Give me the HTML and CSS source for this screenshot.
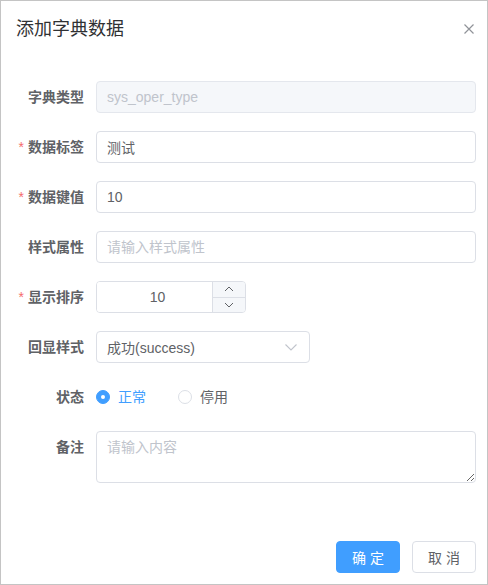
FILE: index.html
```html
<!DOCTYPE html>
<html lang="zh">
<head>
<meta charset="utf-8">
<title>添加字典数据</title>
<link rel="stylesheet" href="styles.css">
</head>
<body>
<div class="dialog">
  <div class="dialog-header">
    <span class="dialog-title">添加字典数据</span>
    <button class="dialog-close" aria-label="Close">
      <svg width="10" height="10" viewBox="0 0 10 10"><path d="M0.5 0.5 L9.5 9.5 M9.5 0.5 L0.5 9.5" stroke="#909399" stroke-width="1.2" fill="none"/></svg>
    </button>
  </div>
  <div class="dialog-body">
    <form class="form">
      <div class="form-item">
        <label class="form-label">字典类型</label>
        <div class="form-content"><input class="input is-disabled" value="sys_oper_type" disabled></div>
      </div>
      <div class="form-item">
        <label class="form-label is-required">数据标签</label>
        <div class="form-content"><input class="input" value="测试"></div>
      </div>
      <div class="form-item">
        <label class="form-label is-required">数据键值</label>
        <div class="form-content"><input class="input" value="10"></div>
      </div>
      <div class="form-item">
        <label class="form-label">样式属性</label>
        <div class="form-content"><input class="input" placeholder="请输入样式属性"></div>
      </div>
      <div class="form-item">
        <label class="form-label is-required">显示排序</label>
        <div class="form-content">
          <div class="number-input">
            <input class="number-field" value="10">
            <div class="number-controls">
              <span class="number-btn">
                <svg width="10" height="6" viewBox="0 0 10 6"><path d="M1 5 L5 1 L9 5" stroke="#606266" stroke-width="1" fill="none"/></svg>
              </span>
              <span class="number-btn">
                <svg width="10" height="6" viewBox="0 0 10 6"><path d="M1 1 L5 5 L9 1" stroke="#606266" stroke-width="1" fill="none"/></svg>
              </span>
            </div>
          </div>
        </div>
      </div>
      <div class="form-item">
        <label class="form-label">回显样式</label>
        <div class="form-content">
          <div class="select">
            <span class="select-value">成功(success)</span>
            <svg class="select-arrow" width="12" height="7" viewBox="0 0 12 7"><path d="M0.5 0.5 L6 6 L11.5 0.5" stroke="#c0c4cc" stroke-width="1.1" fill="none"/></svg>
          </div>
        </div>
      </div>
      <div class="form-item">
        <label class="form-label">状态</label>
        <div class="form-content radio-group">
          <span class="radio is-checked"><span class="radio-circle"></span><span class="radio-label">正常</span></span>
          <span class="radio"><span class="radio-circle"></span><span class="radio-label">停用</span></span>
        </div>
      </div>
      <div class="form-item">
        <label class="form-label">备注</label>
        <div class="form-content"><textarea class="textarea" placeholder="请输入内容"></textarea></div>
      </div>
    </form>
  </div>
  <div class="dialog-footer">
    <button class="btn btn-primary">确 定</button>
    <button class="btn">取 消</button>
  </div>
</div>
</body>
</html>
```
FILE: styles.css
```css
* { box-sizing: border-box; }
html, body { margin: 0; padding: 0; }
body {
  font-family: "Liberation Sans", "Noto Sans CJK SC", sans-serif;
  color: #606266;
  background: #fff;
}
.dialog {
  width: 488px;
  height: 585px;
  border: 1px solid #c4c4c4;
  background: #fff;
  display: flex;
  flex-direction: column;
}
.dialog-header {
  padding: 16px 13px 10px 15px;
  display: flex;
  align-items: center;
  justify-content: space-between;
}
.dialog-title {
  font-size: 18px;
  line-height: 24px;
  color: #303133;
}
.dialog-close {
  border: 0;
  background: none;
  padding: 0;
  width: 10px;
  height: 10px;
  display: flex;
  margin-top: -1px;
}
.dialog-body {
  padding: 30px 11px 0 15px;
  flex: 1;
}
.form-item {
  display: flex;
  margin-bottom: 18px;
}
.form-label {
  width: 80px;
  flex: none;
  padding-right: 12px;
  text-align: right;
  font-size: 14px;
  font-weight: bold;
  line-height: 32px;
  color: #606266;
}
.form-label.is-required::before {
  content: "*";
  color: #f56c6c;
  margin-right: 4px;
  font-weight: normal;
}
.form-content {
  flex: 1;
  min-height: 32px;
  display: flex;
  align-items: center;
}
.input {
  width: 100%;
  height: 32px;
  border: 1px solid #dcdfe6;
  border-radius: 4px;
  padding: 0 10px;
  font-family: inherit;
  font-size: 14px;
  color: #606266;
  background: #fff;
  outline: none;
}
.input::placeholder, .textarea::placeholder { color: #c0c4cc; }
.input.is-disabled {
  background: #f5f7fa;
  border-color: #e4e7ed;
  color: #c0c4cc;
}
.number-input {
  width: 150px;
  height: 32px;
  display: flex;
  border: 1px solid #dcdfe6;
  border-radius: 4px;
  overflow: hidden;
}
.number-field {
  flex: 1;
  min-width: 0;
  border: 0;
  padding: 0 9px 0 15px;
  text-align: center;
  font-family: inherit;
  font-size: 14px;
  color: #606266;
  outline: none;
}
.number-controls {
  width: 33px;
  display: flex;
  flex-direction: column;
  border-left: 1px solid #dcdfe6;
  background: #f5f7fa;
}
.number-btn {
  flex: 1;
  display: flex;
  align-items: center;
  justify-content: center;
}
.number-btn + .number-btn { border-top: 1px solid #dcdfe6; }
.select {
  width: 214px;
  height: 32px;
  border: 1px solid #dcdfe6;
  border-radius: 4px;
  padding: 0 12px 0 10px;
  display: flex;
  align-items: center;
  justify-content: space-between;
  font-size: 14px;
  color: #606266;
}
.radio-group { gap: 0; }
.radio {
  display: inline-flex;
  align-items: center;
  margin-right: 32px;
  font-size: 14px;
  color: #606266;
}
.radio-circle {
  width: 14px;
  height: 14px;
  border: 1px solid #dcdfe6;
  border-radius: 50%;
  background: #fff;
  position: relative;
}
.radio.is-checked .radio-circle {
  background: #409eff;
  border-color: #409eff;
}
.radio.is-checked .radio-circle::after {
  content: "";
  position: absolute;
  width: 4px;
  height: 4px;
  border-radius: 50%;
  background: #fff;
  left: 4px;
  top: 4px;
}
.radio-label { padding-left: 8px; line-height: 1; }
.radio.is-checked .radio-label { color: #409eff; }
.textarea {
  width: 100%;
  height: 52px;
  border: 1px solid #dcdfe6;
  border-radius: 4px;
  padding: 5px 10px;
  font-family: inherit;
  font-size: 14px;
  line-height: 1.5;
  color: #606266;
  outline: none;
  resize: vertical;
  display: block;
}
.dialog-footer {
  padding: 0 11px 11px 0;
  display: flex;
  justify-content: flex-end;
  gap: 12px;
}
.btn {
  width: 64px;
  height: 32px;
  border: 1px solid #dcdfe6;
  border-radius: 4px;
  background: #fff;
  color: #606266;
  font-family: inherit;
  font-size: 14px;
  padding: 0;
}
.btn-primary {
  background: #409eff;
  border-color: #409eff;
  color: #fff;
}
```
